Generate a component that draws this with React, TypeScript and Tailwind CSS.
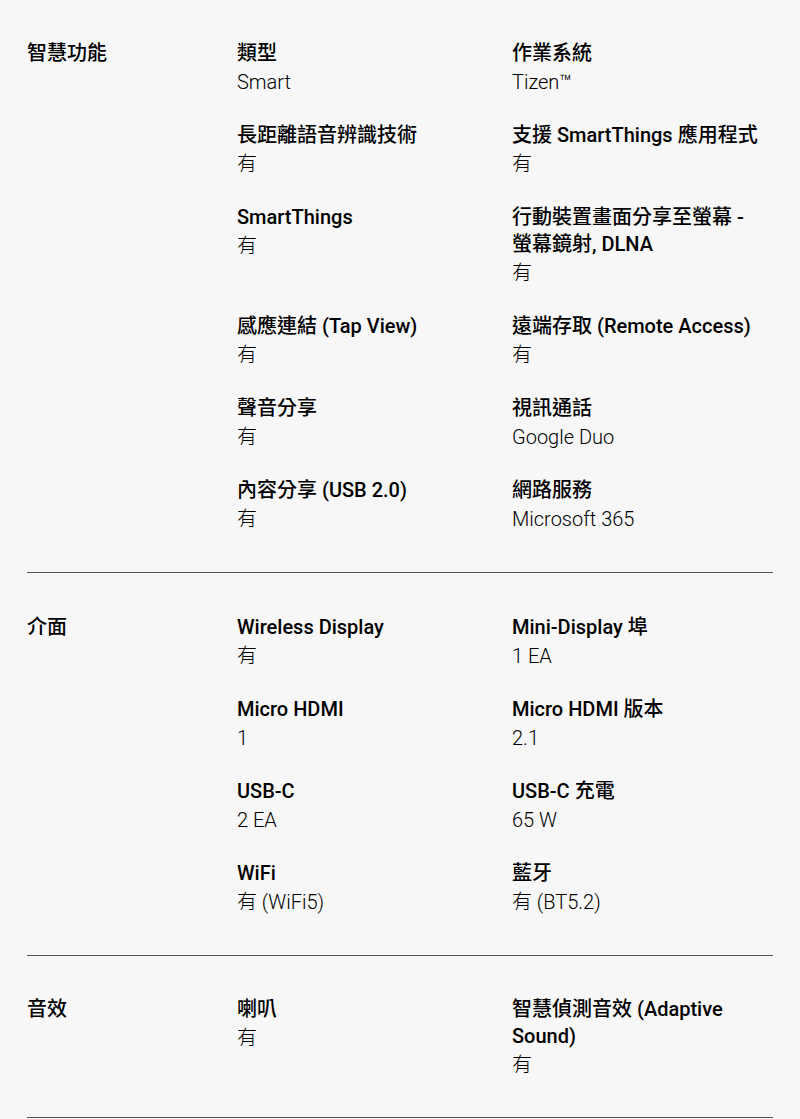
import React from "react";

type Item = { label: React.ReactNode; value: string };
type Section = { title: string; items: Item[]; pad: string };

const sections: Section[] = [
  {
    title: "智慧功能",
    pad: "pt-[40px] pb-[38px]",
    items: [
      { label: "類型", value: "Smart" },
      { label: "作業系統", value: "Tizen™" },
      { label: "長距離語音辨識技術", value: "有" },
      { label: "支援 SmartThings 應用程式", value: "有" },
      { label: "SmartThings", value: "有" },
      {
        label: (
          <>
            行動裝置畫面分享至螢幕 -<br />
            螢幕鏡射, DLNA
          </>
        ),
        value: "有",
      },
      { label: "感應連結 (Tap View)", value: "有" },
      { label: "遠端存取 (Remote Access)", value: "有" },
      { label: "聲音分享", value: "有" },
      { label: "視訊通話", value: "Google Duo" },
      { label: "內容分享 (USB 2.0)", value: "有" },
      { label: "網路服務", value: "Microsoft 365" },
    ],
  },
  {
    title: "介面",
    pad: "pt-[41px] pb-[38px]",
    items: [
      { label: "Wireless Display", value: "有" },
      { label: "Mini-Display 埠", value: "1 EA" },
      { label: "Micro HDMI", value: "1" },
      { label: "Micro HDMI 版本", value: "2.1" },
      { label: "USB-C", value: "2 EA" },
      { label: "USB-C 充電", value: "65 W" },
      { label: "WiFi", value: "有 (WiFi5)" },
      { label: "藍牙", value: "有 (BT5.2)" },
    ],
  },
  {
    title: "音效",
    pad: "pt-[40px] pb-[37px]",
    items: [
      { label: "喇叭", value: "有" },
      {
        label: (
          <>
            智慧偵測音效 (Adaptive
            <br />
            Sound)
          </>
        ),
        value: "有",
      },
    ],
  },
];

export default function App() {
  return (
    <div
      className="min-h-[1119px] w-[800px] bg-[#f7f7f7] px-[27px] text-black"
      style={{ fontFamily: 'Roboto, "Noto Sans CJK TC", sans-serif' }}
    >
      {sections.map((s) => (
        <div key={s.title} className={`flex border-b border-[#555] ${s.pad}`}>
          <div className="w-[210px] shrink-0 text-[20px] font-medium leading-[27px]">
            {s.title}
          </div>
          <div className="grid flex-1 grid-cols-[275px_1fr] gap-y-[25px]">
            {s.items.map((it, j) => (
              <div key={j} className="flex flex-col">
                <div className="text-[20px] font-medium leading-[27px]">{it.label}</div>
                <div className="mt-[1px] text-[20px] font-light leading-[29px] text-black">
                  {it.value}
                </div>
              </div>
            ))}
          </div>
        </div>
      ))}
    </div>
  );
}
